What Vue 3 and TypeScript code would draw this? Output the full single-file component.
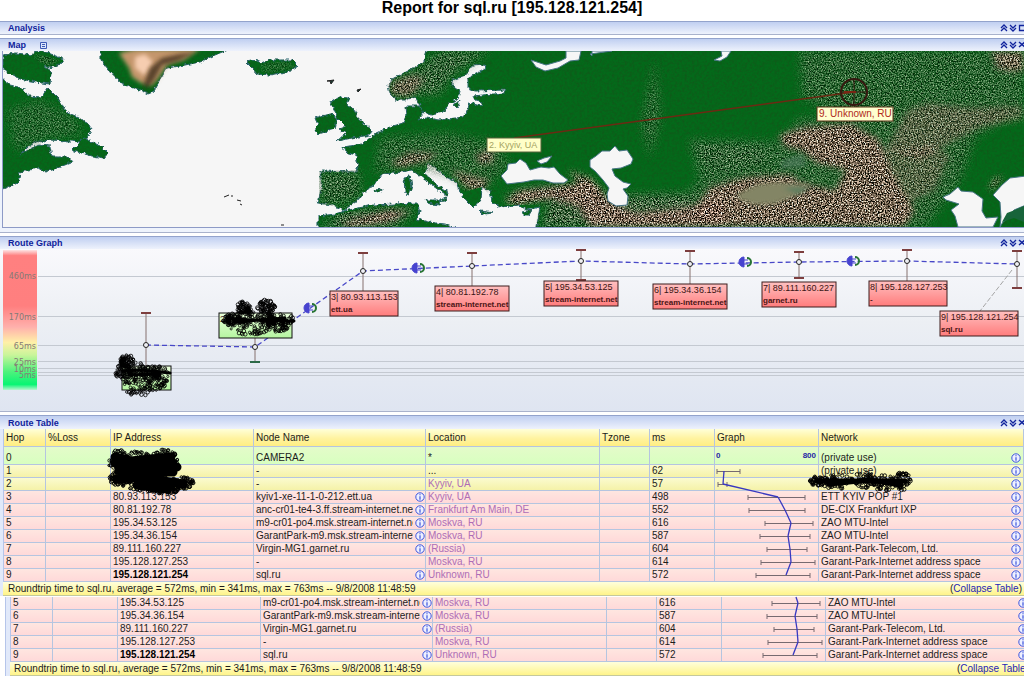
<script setup lang="ts">
interface Hop {
  hop: number
  ip: string
  node: string
  info: boolean
  location: string
  ms: string
  network: string
  tone: 'green' | 'yellow' | 'pink'
  low?: number
  high?: number
  avg?: number
}

interface Dot { x: number; y: number; r: number }

const hops: Hop[] = [
  { hop: 0, ip: '', node: 'CAMERA2', info: false, location: '*', ms: '', network: '(private use)', tone: 'green' },
  { hop: 1, ip: '', node: '-', info: false, location: '...', ms: '62', network: '(private use)', tone: 'yellow', low: 2, high: 25, avg: 9 },
  { hop: 2, ip: '', node: '-', info: false, location: 'Kyyiv, UA', ms: '57', network: '', tone: 'yellow', low: 3, high: 12, avg: 8 },
  { hop: 3, ip: '80.93.113.153', node: 'kyiv1-xe-11-1-0-212.ett.ua', info: true, location: 'Kyyiv, UA', ms: '498', network: 'ETT KYIV POP #1', tone: 'pink', low: 33, high: 90, avg: 63 },
  { hop: 4, ip: '80.81.192.78', node: 'anc-cr01-te4-3.ff.stream-internet.net', info: true, location: 'Frankfurt Am Main, DE', ms: '552', network: 'DE-CIX Frankfurt IXP', tone: 'pink', low: 34, high: 90, avg: 70 },
  { hop: 5, ip: '195.34.53.125', node: 'm9-cr01-po4.msk.stream-internet.net', info: true, location: 'Moskva, RU', ms: '616', network: 'ZAO MTU-Intel', tone: 'pink', low: 50, high: 98, avg: 76 },
  { hop: 6, ip: '195.34.36.154', node: 'GarantPark-m9.msk.stream-internet.net', info: true, location: 'Moskva, RU', ms: '587', network: 'ZAO MTU-Intel', tone: 'pink', low: 45, high: 95, avg: 73 },
  { hop: 7, ip: '89.111.160.227', node: 'Virgin-MG1.garnet.ru', info: true, location: '(Russia)', ms: '604', network: 'Garant-Park-Telecom, Ltd.', tone: 'pink', low: 52, high: 92, avg: 75 },
  { hop: 8, ip: '195.128.127.253', node: '-', info: false, location: 'Moskva, RU', ms: '614', network: 'Garant-Park-Internet address space', tone: 'pink', low: 46, high: 100, avg: 76 },
  { hop: 9, ip: '195.128.121.254', node: 'sql.ru', info: true, location: 'Unknown, RU', ms: '572', network: 'Garant-Park-Internet address space', tone: 'pink', low: 41, high: 95, avg: 71 },
]

const tables = [
  { id: 'main', head: true, rows: hops },
  { id: 'tail', head: false, rows: hops.slice(5) },
]

function segment(rows: Hop[], i: number, head: boolean): string {
  const cur = rows[i]
  if (cur.avg === undefined) return ''
  const prev = i > 0 ? rows[i - 1].avg : undefined
  if (prev !== undefined) return `M${prev} -7L${cur.avg} 6`
  return head ? '' : `M${cur.avg - 2} 0L${cur.avg} 6`
}

const gridLines = [276, 316, 345, 361, 368, 372, 375]
const axis = [
  { y: 279, t: '460ms' }, { y: 320, t: '170ms' }, { y: 349, t: '65ms' },
  { y: 365, t: '25ms' }, { y: 372, t: '10ms' }, { y: 378, t: '5ms' },
]
const points = [
  { x: 146, y: 345, top: 313, bottom: 370, cap: false },
  { x: 255, y: 347, top: 330, bottom: 362, cap: true },
  { x: 363, y: 271, top: 253, bottom: 291, cap: false },
  { x: 472, y: 266, top: 253, bottom: 286, cap: false },
  { x: 581, y: 261, top: 250, bottom: 280, cap: true },
  { x: 690, y: 264, top: 251, bottom: 284, cap: false },
  { x: 799, y: 262, top: 252, bottom: 278, cap: true },
  { x: 907, y: 261, top: 250, bottom: 281, cap: false },
  { x: 1017, y: 264, top: 251, bottom: 288, cap: true },
]
const route = points.map((p) => `${p.x},${p.y}`).join(' ')
const plugs = [{ x: 309, y: 308 }, { x: 417, y: 268 }, { x: 744, y: 262 }, { x: 852, y: 261 }]
const boxes = [
  { x: 330, y: 291, w: 68, a: '3| 80.93.113.153', b: 'ett.ua' },
  { x: 435, y: 286, w: 74, a: '4| 80.81.192.78', b: 'stream-internet.net' },
  { x: 544, y: 281, w: 74, a: '5| 195.34.53.125', b: 'stream-internet.net' },
  { x: 653, y: 284, w: 74, a: '6| 195.34.36.154', b: 'stream-internet.net' },
  { x: 762, y: 282, w: 74, a: '7| 89.111.160.227', b: 'garnet.ru' },
  { x: 869, y: 281, w: 78, a: '8| 195.128.127.253', b: '-' },
  { x: 940, y: 311, w: 78, a: '9| 195.128.121.254', b: 'sql.ru' },
]

function scatter(seed: number, count: number, blobs: number[][]): Dot[] {
  let s = seed
  const rnd = () => {
    s = (s * 16807) % 2147483647
    return s / 2147483647
  }
  const out: Dot[] = []
  for (let i = 0; i < count; i++) {
    const b = blobs[i % blobs.length]
    const a = rnd() * Math.PI * 2
    const d = Math.sqrt(rnd())
    out.push({ x: b[0] + Math.cos(a) * d * b[2], y: b[1] + Math.sin(a) * d * b[3], r: 1 + rnd() })
  }
  return out
}

const graphScribble = [
  ...scatter(11, 360, [[127, 361, 7, 6], [124, 373, 8, 10], [138, 370, 14, 8], [155, 373, 15, 7], [138, 386, 14, 11], [153, 382, 14, 9]]),
  ...scatter(29, 460, [[232, 320, 9, 6], [244, 308, 7, 7], [266, 307, 9, 7], [250, 318, 26, 6], [278, 320, 18, 6], [250, 326, 20, 9], [278, 325, 12, 7]]),
]
const ipScribble = scatter(47, 620, [[12, 14, 11, 12], [30, 14, 18, 11], [58, 14, 14, 12], [36, 26, 27, 11], [14, 31, 12, 8], [42, 36, 28, 8], [56, 42, 17, 5], [75, 36, 12, 6]])
const netScribble = scatter(83, 250, [[10, 12, 10, 5], [28, 12, 16, 8], [55, 11, 14, 8], [76, 14, 14, 8], [93, 12, 9, 9]])
</script>

<template>
  <main class="report">
    <h1>Report for sql.ru [195.128.121.254]</h1>

    <svg class="defs" aria-hidden="true">
      <defs>
        <symbol id="up" viewBox="0 0 8 8"><path d="M1 4L4 1L7 4M1 7L4 4L7 7" fill="none" stroke="#10239c" stroke-width="1.3" /></symbol>
        <symbol id="down" viewBox="0 0 8 8"><path d="M1 1L4 4L7 1M1 4L4 7L7 4" fill="none" stroke="#10239c" stroke-width="1.3" /></symbol>
        <symbol id="close" viewBox="0 0 8 8"><path d="M1 1L7 6M7 1L1 6" fill="none" stroke="#10239c" stroke-width="1.5" /></symbol>
        <symbol id="open" viewBox="0 0 8 8"><path d="M1.500 1.500H7.500V6.500H1.500Z" fill="none" stroke="#10239c" stroke-width="1.3" /></symbol>
        <symbol id="info" viewBox="0 0 10 10">
          <circle cx="5" cy="5" r="4.200" fill="#eef0ff" stroke="#3d55dd" stroke-width="1" />
          <path d="M5 2.200V3.300M5 4.200V7.800" stroke="#3d55dd" stroke-width="1.200" />
        </symbol>
      </defs>
    </svg>

    <section class="panel">
      <header class="bar">
        <h2>Analysis</h2>
        <div class="tools">
          <button type="button" aria-label="Move analysis up"><svg><use href="#up" /></svg></button>
          <button type="button" aria-label="Move analysis down"><svg><use href="#down" /></svg></button>
          <button type="button" aria-label="Open analysis"><svg><use href="#open" /></svg></button>
        </div>
      </header>
    </section>

    <section class="panel map-panel">
      <header class="bar">
        <h2>Map</h2>
        <button type="button" class="list" aria-label="Map options">
          <svg viewBox="0 0 7 7"><path d="M.5 .5H6.500V6.500H.5Z" fill="#dce6fa" stroke="#3e5bb5" /><path d="M2 2.500H5M2 4.500H5" stroke="#3e5bb5" /></svg>
        </button>
        <div class="tools">
          <button type="button" aria-label="Move map up"><svg><use href="#up" /></svg></button>
          <button type="button" aria-label="Move map down"><svg><use href="#down" /></svg></button>
          <button type="button" aria-label="Close map"><svg><use href="#close" /></svg></button>
        </div>
      </header>
      <div class="map-frame">
        <svg class="map" viewBox="3 51 1021 176" preserveAspectRatio="xMinYMid slice" role="img" aria-label="Route map">
          <defs>
            <filter id="coast" x="0" y="51" width="1024" height="176" filterUnits="userSpaceOnUse" color-interpolation-filters="sRGB">
              <feTurbulence type="fractalNoise" baseFrequency="0.25" numOctaves="2" seed="4" result="n" />
              <feDisplacementMap in="SourceGraphic" in2="n" scale="5" xChannelSelector="R" yChannelSelector="G" result="land" />
              <feTurbulence type="fractalNoise" baseFrequency="0.4" numOctaves="2" seed="9" />
              <feColorMatrix values="0 0 0 0 0.1  0 0 0 0 0.3  0 0 0 0 0.1  1.200 0 0 0 -0.480" />
              <feComposite in2="land" operator="in" result="grain" />
              <feMerge><feMergeNode in="land" /><feMergeNode in="grain" /></feMerge>
            </filter>
            <filter id="rock" x="0" y="51" width="1024" height="176" filterUnits="userSpaceOnUse" color-interpolation-filters="sRGB">
              <feGaussianBlur in="SourceAlpha" stdDeviation="3" result="soft" />
              <feTurbulence type="fractalNoise" baseFrequency="0.75" numOctaves="2" seed="12" />
              <feColorMatrix values="2.900 0 0 0 -0.960  2.700 0 0 0 -0.950  2.600 0 0 0 -0.960  0 0 0 0 1" />
              <feComposite in2="soft" operator="in" />
            </filter>
            <filter id="hill" x="0" y="51" width="1024" height="176" filterUnits="userSpaceOnUse" color-interpolation-filters="sRGB">
              <feGaussianBlur in="SourceAlpha" stdDeviation="5" result="soft" />
              <feTurbulence type="fractalNoise" baseFrequency="0.75" numOctaves="2" seed="21" />
              <feColorMatrix values="2.200 0 0 0 -0.850  1.800 0 0 0 -0.500  1.900 0 0 0 -0.700  0 0 0 0 1" />
              <feComposite in2="soft" operator="in" />
            </filter>
            <filter id="haze" x="-20%" y="-20%" width="140%" height="140%"><feGaussianBlur stdDeviation="2" /></filter>
            <clipPath id="landClip">
              <path d="M430 51L424 62L410 70L392 79L388 85L390 94L396 100L405 100L418 96L424 110L403 123L373 135L360 145L358 170L319 171V204L333 206L345 209L357 201L365 191L373 186L382 174L395 173L412 170L425 180L440 191L460 193L482 187L500 205H539L535 227H1024V51Z" />
              <path d="M318 218L335 215L373 206L416 205L417 219L440 227H318Z" />
              <path d="M3 79L10 85L22 88L28 96L42 97L48 88L66 112L90 126L88 140H45L3 175Z" />
              <path d="M30 52L60 60L50 67L35 60Z" />
              <path d="M260 63L290 62L295 66L290 70L270 73L260 72Z" />
            </clipPath>
          </defs>
          <rect x="0" y="51" width="1024" height="176" fill="#f6f6f6" />
          <g filter="url(#coast)" fill="#04691a" stroke="#2a6670" stroke-width="1">
            <path d="M3 55L15 53L32 55L34 51L46 52L63 59L60 64L50 68L43 66L51 72L50 84L42 83L20 79L3 70Z" />
            <path d="M3 79L10 85L22 88L28 96L42 97L48 88L58 98L66 112L80 118L91 126L90 134L80 142L70 141L50 140L36 142L28 147L20 155L28 150L38 145L50 146L52 157L68 157L72 162L60 167L45 172L38 168L20 172L18 183L0 190V79Z" />
            <path d="M72 150L84 138L90 141L100 145L108 153L104 158L98 157L92 156L74 151Z" />
            <path d="M101 48H232L215 55L200 62L180 66L167 68L160 80L153 92L148 94L142 91L130 87L120 82L108 69L101 60Z" />
            <path d="M246 62L254 60L262 63L270 60L292 60L298 66L290 71L270 75L257 74L252 68Z" />
            <path d="M320 116L332 114L337 119L335 129L317 134L315 130L318 125L315 118Z" />
            <path d="M330 102L338 97L349 98L346 104L354 109L358 119L372 130L370 135L352 138L337 141L346 133L339 130L345 126L338 119L334 109Z" />
            <path d="M428 48L424 62L410 70L392 79L388 85L390 94L396 100L405 100L415 96L419 104L423 112L432 115L443 112L449 104L458 98L460 90L452 87L452 80L465 76L472 66L485 65L484 70L468 78L468 88L475 91L506 90L504 93L473 96L475 100L483 102L481 106L469 103L468 110L463 117L440 120L426 118L418 120L424 113L419 106L405 106L406 116L403 123L390 127L373 135L363 144L343 147L345 152L356 155L358 165L356 172L320 171L322 185L318 203L333 205L344 210L357 201L365 191L373 186L382 174L395 173L412 170L425 180L440 191L447 196L440 202L433 202L445 201L449 193L438 185L425 174L427 164L435 167L446 177L458 183L460 193L467 201L474 208L481 200L482 187L490 190L492 202L500 207L520 205L526 210L540 207L536 232H1029V48Z" />
            <path d="M318 216L335 214L344 211L373 205L417 203L420 211L417 219L428 222L445 224L465 232H318Z" />
            <path d="M404 177L410 176L412 186L409 195L405 193ZM426 200L440 200L439 205L428 203ZM480 211L494 213L483 214ZM522 212L532 210L529 215L523 215ZM453 104L460 101L457 107ZM374 190L384 189L376 193Z" />
          </g>
          <path d="M327 81L334 80L331 84L330 81ZM357 90L361 89L358 92ZM224 197L229 195M231 196H233M237 200L241 201M240 204L242 205M281 225H284" fill="#173b30" stroke="#222" />
          <g clip-path="url(#landClip)">
            <g filter="url(#hill)">
              <path d="M8 110L40 100L75 118L82 135L45 140L14 150Z" opacity=".5" />
              <path d="M35 55H62L46 68Z" opacity=".8" />
              <path d="M394 95L390 84L420 67L440 51H490L455 73L438 95Z" opacity=".8" />
              <path d="M319 172H360L360 198L322 207Z" opacity=".75" />
              <path d="M380 138L445 133L495 143L510 165L483 190L452 176L420 167L374 172Z" opacity=".6" />
              <path d="M655 60L660 120L650 158L642 125Z" opacity=".6" />
              <path d="M800 51H1024V108L975 138L960 180L925 227H700L670 210L700 180L690 140L780 142L800 118L850 120L802 98Z" opacity=".65" />
              <path d="M345 210L418 208L395 227H320ZM500 195L560 184L610 196L680 194L715 207L725 227H540L550 202Z" />
              <path d="M688 145L760 148L770 162L720 170Z" opacity=".5" />
              <path d="M262 62L294 60L289 72L261 72Z" opacity=".5" />
            </g>
            <g filter="url(#rock)">
              <path d="M389 95L390 82L411 75L425 78L410 98Z" opacity=".7" />
              <path d="M390 163L410 152L438 153L430 160L400 168ZM450 170L490 180L480 195L465 188ZM475 155L492 148L494 162L480 165Z" opacity=".8" />
              <path d="M345 222L390 210L410 212L390 221L355 227H342ZM504 200L520 190L555 187L590 180L610 201L635 213L680 208L724 200V227H590L578 206L550 198L515 206Z" opacity=".9" />
              <path d="M568 170L590 177L605 192L594 198L578 184Z" opacity=".8" />
              <path d="M778 135L805 127L850 123L880 140L890 168L902 190L915 210L905 227H730L690 214L710 187L745 177L790 174L800 182L835 190L846 170L818 164L800 150L785 147Z" opacity=".9" />
              <path d="M908 110L928 103L970 108L1024 106V120L980 127L955 140L920 160L885 150Z" opacity=".55" />
              <path d="M880 152L930 145L950 155L935 190L905 205Z" opacity=".5" />
              <path d="M990 51H1024V72L998 70ZM988 190L994 178L1003 176L995 188Z" opacity=".8" />
            </g>
          </g>
          <path d="M119 53L135 49H200L184 60L167 65L157 80L151 86L141 83L132 77L129 68Z" fill="#c4966c" filter="url(#haze)" />
          <path d="M135 57L145 54L153 62L145 76L135 68Z" fill="#f6cdb0" filter="url(#haze)" />
          <path d="M150 68L162 58L180 54L196 52L177 61L162 65L154 80L146 90L144 83Z" fill="#352713" opacity=".75" filter="url(#haze)" />
          <path d="M737 194L758 184L780 182L810 185L800 194L775 204L756 205L740 200Z" fill="#838565" filter="url(#haze)" />
          <path d="M783 188L812 187L798 194ZM783 160L803 154L806 167L780 169Z" fill="#4d795c" opacity=".7" filter="url(#haze)" />
          <g fill="#f6f6f6" stroke="#477585" stroke-width="1" stroke-linejoin="round">
            <path d="M501 176L507 170L508 164L516 163L520 159L526 163L530 170L537 168L541 167L549 168L554 167L560 174L568 180L564 183L553 183L543 180L534 180L524 182L507 184Z" />
            <path d="M537 161L544 158L552 156L547 162L541 164Z" />
            <path d="M590 160L596 156L602 151L610 151L615 146L619 151L627 150L633 159L631 164L621 168L612 169L615 176L623 182L631 184L627 188L623 189L628 196L627 205L616 206L608 201L607 194L609 188L603 180L595 171L590 167Z" />
            <path d="M531 60L546 65L560 61L566 58L566 51H581L579 60L570 61L558 68L545 71L536 67ZM590 54L612 51H592V56Z" />
            <path d="M714 60L722 56L721 51H731L727 57L720 61Z" />
            <path d="M943 197L950 194L958 187L961 191L973 192L983 199L982 211L986 218L998 217L993 227H958L955 216L951 210L959 204L946 200Z" />
            <path d="M1000 227L1001 217L1000 202L993 195L1002 185L1010 178L1026 176V205L1014 210L1007 219L1003 222Z" />
          </g>
          <path d="M1002 222L1007 213L1015 210L1024 206V222L1014 218Z" fill="#17643a" />
          <path d="M514 138L854 92" stroke="#6b2a13" stroke-width="1.300" />
          <g fill="none" stroke="#361810">
            <circle cx="854" cy="92" r="13" stroke-width="2" />
            <path d="M841 92H867M854 79V105" />
            <path d="M844 92H856" stroke="#7a2514" stroke-width="2" />
          </g>
          <rect x="487" y="138" width="54" height="14" fill="#ffffc8" stroke="#57623a" />
          <text x="489" y="148" class="map-text muted">2. Kyyiv, UA</text>
          <rect x="817" y="107" width="76" height="14" fill="#ffffcf" stroke="#5c351b" />
          <text x="819" y="117" class="map-text target">9. Unknown, RU</text>
        </svg>
      </div>
    </section>

    <section class="panel">
      <header class="bar">
        <h2>Route Graph</h2>
        <div class="tools">
          <button type="button" aria-label="Move graph up"><svg><use href="#up" /></svg></button>
          <button type="button" aria-label="Move graph down"><svg><use href="#down" /></svg></button>
          <button type="button" aria-label="Close graph"><svg><use href="#close" /></svg></button>
        </div>
      </header>
      <svg class="graph" viewBox="0 249 1024 162" preserveAspectRatio="xMinYMid slice" role="img" aria-label="Route latency graph">
        <defs>
          <linearGradient id="heat" x1="0" y1="0" x2="0" y2="1">
            <stop offset="0" stop-color="#fde4e4" /><stop offset=".04" stop-color="#ff8080" />
            <stop offset=".4" stop-color="#ff7f7f" /><stop offset=".55" stop-color="#ffb0ac" />
            <stop offset=".66" stop-color="#fff0a8" /><stop offset=".75" stop-color="#c9f59a" />
            <stop offset=".87" stop-color="#4df27c" /><stop offset=".96" stop-color="#08f573" /><stop offset="1" stop-color="#b8f5d0" />
          </linearGradient>
          <linearGradient id="hot" x1="0" y1="0" x2="0" y2="1"><stop offset="0" stop-color="#ffc0c0" /><stop offset="1" stop-color="#ff7c7c" /></linearGradient>
          <linearGradient id="cool" x1="0" y1="0" x2="0" y2="1"><stop offset="0" stop-color="#eaffdc" /><stop offset="1" stop-color="#b5f5a0" /></linearGradient>
        </defs>
        <path v-for="y in gridLines" :key="y" :d="`M38 ${y}.500H1024`" stroke="#c4c9d1" />
        <rect x="3" y="250" width="34" height="140" fill="url(#heat)" />
        <text v-for="a in axis" :key="a.t" x="36" :y="a.y" class="axis">{{ a.t }}</text>
        <polyline :points="route" fill="none" stroke="#4848c8" stroke-width="1.300" stroke-dasharray="5 3" />
        <path d="M1012 270L980 311" stroke="#a5a5a5" stroke-dasharray="5 2" />
        <g v-for="p in points" :key="p.x">
          <path :d="`M${p.x} ${p.top}V${p.bottom}`" stroke="#85706f" />
          <path v-if="p.x !== 255" :d="`M${p.x - 5} ${p.top}H${p.x + 5}`" stroke="#7d3e3e" stroke-width="2" />
          <path v-if="p.cap" :d="`M${p.x - 5} ${p.bottom}H${p.x + 5}`" :stroke="p.x === 255 ? '#2c6a48' : '#7d3e3e'" stroke-width="2" />
          <circle :cx="p.x" :cy="p.y" r="2.500" fill="#f0f0f4" stroke="#222" />
        </g>
        <g v-for="p in plugs" :key="p.x">
          <path :d="`M${p.x} ${p.y - 5}A5 5 0 0 0 ${p.x} ${p.y + 5}Z`" fill="#4743cf" stroke="#4743cf" />
          <path :d="`M${p.x} ${p.y - 2}H${p.x + 4}M${p.x} ${p.y + 2}H${p.x + 4}`" stroke="#4743cf" />
          <path :d="`M${p.x + 3} ${p.y - 4}A4 4 0 0 1 ${p.x + 3} ${p.y + 4}`" fill="none" stroke="#277333" stroke-width="2" />
        </g>
        <rect x="122" y="366" width="49" height="24" fill="url(#cool)" stroke="#111" />
        <rect x="219" y="313" width="73" height="25" fill="url(#cool)" stroke="#111" />
        <text x="220" y="322" class="box-ip">2</text>
        <g v-for="b in boxes" :key="b.a">
          <rect :x="b.x" :y="b.y" :width="b.w" height="25" fill="url(#hot)" stroke="#3c1d1d" />
          <text :x="b.x + 1" :y="b.y + 9" class="box-ip">{{ b.a }}</text>
          <text :x="b.x + 1" :y="b.y + 21" class="box-host">{{ b.b }}</text>
        </g>
        <path d="M124 371L140 370L170 373M130 375L160 374M228 319L255 320L294 321M236 322L285 318" fill="none" stroke="#000" stroke-width="3" stroke-linecap="round" />
        <circle v-for="(d, i) in graphScribble" :key="i" :cx="d.x" :cy="d.y" :r="d.r" fill="none" stroke="#000" stroke-width=".8" />
      </svg>
    </section>

    <section class="panel table-panel">
      <header class="bar">
        <h2>Route Table</h2>
        <div class="tools">
          <button type="button" aria-label="Move table up"><svg><use href="#up" /></svg></button>
          <button type="button" aria-label="Move table down"><svg><use href="#down" /></svg></button>
          <button type="button" aria-label="Close table"><svg><use href="#close" /></svg></button>
        </div>
      </header>
      <div v-for="t in tables" :key="t.id" class="sheet" :class="t.id">
        <table>
          <colgroup>
            <col class="c-hop"><col class="c-loss"><col class="c-ip"><col class="c-node"><col class="c-loc">
            <col class="c-tz"><col class="c-ms"><col class="c-graph"><col>
          </colgroup>
          <thead v-if="t.head">
            <tr>
              <th>Hop</th><th>%Loss</th><th>IP Address</th><th>Node Name</th><th>Location</th>
              <th>Tzone</th><th>ms</th><th>Graph</th><th>Network</th>
            </tr>
          </thead>
          <tbody>
            <tr v-for="(h, i) in t.rows" :key="h.hop" :class="h.tone">
              <td>{{ h.hop }}</td>
              <td></td>
              <td>
                <strong v-if="h.hop === 9">{{ h.ip }}</strong>
                <template v-else>{{ h.ip }}</template>
                <svg v-if="h.hop === 0" class="scribble ip" viewBox="0 0 90 50" aria-hidden="true">
                  <path d="M8 10L24 14L64 10M8 16H66M12 23L70 20M10 32L30 30L76 37M30 38L60 42M24 25H66" fill="none" stroke="#000" stroke-width="9" stroke-linecap="round" />
                  <circle v-for="(d, k) in ipScribble" :key="k" :cx="d.x" :cy="d.y" :r="d.r" fill="none" stroke="#000" stroke-width=".9" />
                </svg>
              </td>
              <td>
                <div class="pair">
                  <span class="clip">{{ h.node }}</span>
                  <button v-if="h.info" type="button" class="info" :aria-label="`About ${h.node}`"><svg><use href="#info" /></svg></button>
                </div>
              </td>
              <td><a v-if="h.hop > 1" href="#">{{ h.location }}</a><template v-else>{{ h.location }}</template></td>
              <td></td>
              <td>{{ h.ms }}</td>
              <td class="plot">
                <div v-if="h.hop === 0" class="scale"><span>0</span><span>800</span></div>
                <svg v-else viewBox="0 0 102 12" aria-hidden="true">
                  <path :d="`M${h.low} 6.500H${h.high}M${h.low} 4V9M${h.high} 4V9`" stroke="#766a70" />
                  <path :d="segment(t.rows, i, t.head)" stroke="#3838c0" stroke-width="1.300" />
                </svg>
              </td>
              <td>
                <div class="pair">
                  <span class="clip">{{ h.network }}</span>
                  <button type="button" class="info net" :aria-label="`Network of hop ${h.hop}`"><svg><use href="#info" /></svg></button>
                </div>
                <svg v-if="t.head && h.hop === 2" class="scribble net-mark" viewBox="0 0 104 26" aria-hidden="true">
                  <path d="M8 12H96M20 15L60 11L92 16" fill="none" stroke="#000" stroke-width="5" stroke-linecap="round" />
                  <circle v-for="(d, k) in netScribble" :key="k" :cx="d.x" :cy="d.y" :r="d.r" fill="none" stroke="#000" stroke-width=".9" />
                </svg>
              </td>
            </tr>
          </tbody>
        </table>
        <footer class="summary">
          <span>Roundtrip time to sql.ru, average = 572ms, min = 341ms, max = 763ms -- 9/8/2008 11:48:59</span>
          <span>(<a href="#">Collapse Table</a>)</span>
        </footer>
      </div>
    </section>
  </main>
</template>

<style>
body {
  margin: 0;
  background: #fff;
  overflow: hidden;
}
</style>

<style scoped>
.report {
  overflow: hidden;
  font: 10px/12px "Liberation Sans", Arial, sans-serif;
  color: #1c1c1c;
}
h1 {
  margin: 0;
  padding-bottom: 5px;
  text-align: center;
  font-size: 16px;
  line-height: 16px;
  color: #000;
}
.defs {
  position: absolute;
  width: 0;
  height: 0;
}
button {
  display: block;
  border: 0;
  padding: 0;
  background: none;
}
.panel {
  margin-bottom: 3px;
  border-top: 1px solid #93a3cc;
  border-bottom: 1px solid #a9b2cc;
}
.bar {
  display: flex;
  align-items: center;
  height: 12px;
  padding-left: 8px;
  background: linear-gradient(#c0cff1, #eef2fc);
}
h2 {
  margin: 0;
  font-size: 9px;
  line-height: 12px;
  color: #10239c;
}
.list {
  width: 7px;
  height: 7px;
  margin-left: 14px;
}
.list svg {
  display: block;
  width: 7px;
  height: 7px;
}
.tools {
  display: flex;
  gap: 1px;
  margin-left: auto;
  margin-right: -2px;
}
.tools svg {
  display: block;
  width: 8px;
  height: 8px;
}
.map-panel {
  padding-bottom: 4px;
  background: #eef3fc;
}
.map-frame {
  margin-left: 2px;
  border: 1px solid #8d9ac6;
  border-right: 0;
  border-top: 0;
}
.map {
  display: block;
  width: 100%;
  height: 176px;
}
.map-text {
  font-size: 10px;
}
.muted {
  font-size: 9px;
  fill: #a4a260;
}
.target {
  fill: #b02a1a;
}
.graph {
  display: block;
  width: 100%;
  height: 162px;
  background: linear-gradient(#f9f9fc, #eceff4 45%, #dfe5f1);
}
.axis {
  font: 8px "DejaVu Sans", sans-serif;
  text-anchor: end;
  fill: #857a76;
}
.box-ip {
  font-size: 9px;
  fill: #3a1414;
}
.box-host {
  font-size: 8px;
  font-weight: bold;
  fill: #4a1515;
}
.table-panel {
  margin: 0;
  border-bottom: 0;
}
.table-panel .bar {
  height: 13px;
}
.sheet {
  padding-left: 3px;
  background: #e1e9fa;
}
.tail {
  margin: 1px -7px 0 5px;
  padding-left: 4px;
  border-left: 1px solid #b5c5ea;
}
table {
  width: 100%;
  table-layout: fixed;
  border-collapse: separate;
  border-spacing: 0;
  border-left: 1px solid #b5c5ea;
}
.c-hop { width: 42px; }
.c-loss { width: 65px; }
.c-ip { width: 143px; }
.c-node { width: 172px; }
.c-loc { width: 174px; }
.c-tz { width: 50px; }
.c-ms { width: 65px; }
.c-graph { width: 104px; }
th,
td {
  box-sizing: border-box;
  height: 13px;
  padding: 0 0 0 2px;
  border-right: 1px solid #b5c5e0;
  border-bottom: 1px solid #b5c5e0;
  text-align: left;
  font-weight: normal;
  white-space: nowrap;
  vertical-align: bottom;
  position: relative;
}
th {
  height: 18px;
  vertical-align: middle;
  background: linear-gradient(#ffffd8, #fff3a0 55%, #ffee82);
}
.green td {
  height: 18px;
  background: linear-gradient(#e4fbc9, #d8ffc0);
}
.yellow td {
  background: linear-gradient(#fbfbcf, #f5f2a8);
}
.pink td {
  background: linear-gradient(#ffe6e0, #ffd9d9);
}
strong {
  color: #000;
}
a {
  color: #ae6db6;
  text-decoration: none;
}
.pair {
  display: flex;
  align-items: center;
  gap: 2px;
  height: 12px;
}
.clip {
  flex: 1;
  overflow: hidden;
}
.info svg {
  display: block;
  width: 10px;
  height: 10px;
}
.net {
  margin-right: 2px;
}
.plot {
  padding: 0;
}
.plot svg {
  display: block;
  width: 102px;
  height: 12px;
  overflow: visible;
}
.scale {
  display: flex;
  justify-content: space-between;
  padding: 0 2px 2px 1px;
  font-size: 8px;
  font-weight: bold;
  color: #2525a5;
}
.scribble {
  position: absolute;
  z-index: 1;
  overflow: visible;
}
.ip {
  left: -4px;
  top: 0;
  width: 90px;
  height: 50px;
}
.net-mark {
  left: -10px;
  top: -9px;
  width: 104px;
  height: 26px;
}
.summary {
  display: flex;
  justify-content: space-between;
  height: 13px;
  padding: 0 2px 0 5px;
  border-bottom: 1px solid #c5c99c;
  line-height: 14px;
  background: linear-gradient(#ffffdc, #fff48a);
}
.tail .summary {
  padding-left: 4px;
}
.summary a {
  color: #2525b8;
}
</style>
